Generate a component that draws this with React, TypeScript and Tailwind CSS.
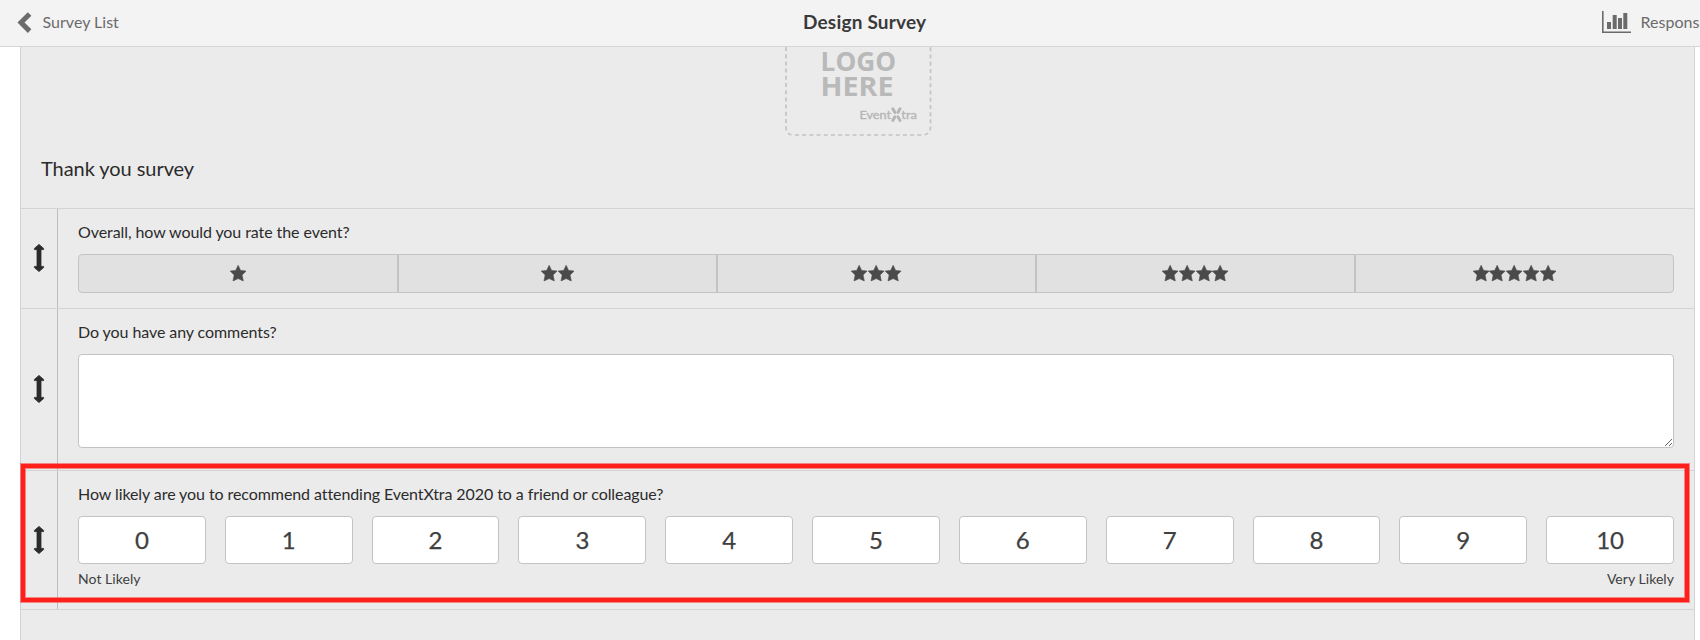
import type { ReactNode } from 'react';

const STAR = 'M8.15 0.3 L10.6 5.4 L16.1 6.1 L12.1 9.9 L13.3 15.9 L8.15 13.6 L3 15.9 L4.2 9.9 L0.2 6.1 L5.7 5.4 Z';

function Stars({ count }: { count: number }) {
  return (
    <span className="flex">
      {Array.from({ length: count }, (_, i) => (
        <svg key={i} className="h-[17px] w-[16.7px] text-[#4a4a4a]" viewBox="0 0 16.7 17">
          <path d={STAR} fill="currentColor" stroke="currentColor" strokeWidth="0.6" strokeLinejoin="round" />
        </svg>
      ))}
    </span>
  );
}

function DragHandle() {
  return (
    <svg className="h-7 w-[10px] overflow-visible" viewBox="0 0 10 28">
      <path
        d="M5 0.4 L9.6 4.4 V5.6 H7 V22.4 H9.6 V23.6 L5 27.6 L0.4 23.6 V22.4 H3 V5.6 H0.4 V4.4 Z"
        fill="#2b2b2b"
        stroke="#2b2b2b"
        strokeWidth="0.8"
        strokeLinejoin="round"
      />
    </svg>
  );
}

function Question({ title, height, children }: { title: string; height: string; children: ReactNode }) {
  return (
    <section className={`flex border-b border-[#d4d4d4] ${height}`}>
      <div className="flex w-[37px] shrink-0 items-center justify-center border-r border-[#bdbdbd] pb-px">
        <DragHandle />
      </div>
      <div className="flex-1 pr-5 pl-5">
        <h3 className="mt-[11px] h-6 text-[16px] leading-6 tracking-[-0.08px] text-[#2b2b2b]">{title}</h3>
        {children}
      </div>
    </section>
  );
}

function Logo() {
  return (
    <svg className="h-[90px] w-[150px] shrink-0 overflow-visible" viewBox="783 47 150 90">
      <path
        d="M786 47 V127 Q786 135 794 135 H922 Q930.5 135 930.5 127 V47"
        fill="none"
        stroke="#c3c3c3"
        strokeWidth="1.7"
        strokeDasharray="4 3.2"
      />
      <g fill="#b9b9b9" fontFamily="'Open Sans', sans-serif" fontWeight="700" fontSize="27.5">
        <text x="820.6" y="71" textLength="75.5" lengthAdjust="spacingAndGlyphs">LOGO</text>
        <text x="820.6" y="95.8" textLength="73" lengthAdjust="spacingAndGlyphs">HERE</text>
      </g>
      <g fill="#b5b5b5" stroke="#b5b5b5" strokeWidth="0.35" fontFamily="Lato, sans-serif" fontSize="12">
        <text x="859.5" y="119" textLength="31.5" lengthAdjust="spacingAndGlyphs">Event</text>
        <text x="901.3" y="119" textLength="15.7" lengthAdjust="spacingAndGlyphs">tra</text>
      </g>
      <g stroke="#b5b5b5" strokeWidth="2.9" strokeLinecap="round">
        <path d="M892.8 108.8 L894.9 112.4" />
        <path d="M900 108.8 L897.9 112.4" />
        <path d="M892.8 120.4 L894.9 116.8" />
        <path d="M900 120.4 L897.9 116.8" />
      </g>
    </svg>
  );
}

export default function App() {
  return (
    <div className="relative h-[640px] w-[1700px] overflow-hidden bg-white font-['Lato',sans-serif]">
      <header className="relative z-10 grid h-[47px] grid-cols-[803px_124px_1fr] items-center border-b border-[#d6d6d6] bg-[#f3f3f3]">
        <div className="flex items-center pb-0.5 pl-[17px]">
          <svg className="h-6 w-4" viewBox="0 0 16 24">
            <path d="M12.6 3.9 L4 12.6 L12.6 21.1" fill="none" stroke="#6b6b6b" strokeWidth="5" />
          </svg>
          <span className="ml-[9.6px] text-[16px] leading-6 text-[#6b6b6b]">Survey List</span>
        </div>
        <h1 className="pb-0.5 text-[19px] leading-6 font-bold tracking-[0.2px] whitespace-nowrap text-[#3a3a3a]">
          Design Survey
        </h1>
        <div className="flex items-center pb-0.5 pl-[675px] whitespace-nowrap">
          <svg className="h-[22px] w-[29px] shrink-0" viewBox="0 0 29 22">
            <path d="M0.8 0 V21.2 H29" fill="none" stroke="#6b6b6b" strokeWidth="1.6" />
            <path d="M5 11h4v7H5z M10.7 4h4v14h-4z M16 7h4v11h-4z M21.3 2h4v16h-4z" fill="#6b6b6b" />
          </svg>
          <span className="ml-[9.6px] text-[16px] leading-6 text-[#6b6b6b]">Respons</span>
        </div>
      </header>

      <main className="ml-5 h-[593px] w-[1675px] border-x border-[#d4d4d4] bg-[#ebebeb]">
        <div className="flex h-[162px] flex-col border-b border-[#d4d4d4]">
          <div className="flex h-[90px] justify-center">
            <Logo />
          </div>
          <h2 className="mt-[17px] pl-5 text-[20px] leading-7 tracking-[-0.06px] text-[#2b2b2b]">Thank you survey</h2>
        </div>

        <Question title="Overall, how would you rate the event?" height="h-[100px]">
          <div className="mt-[10px] grid h-[39px] grid-cols-[320px_319px_319px_319px_319px]">
            {[1, 2, 3, 4, 5].map((n) => (
              <div
                key={n}
                className="flex items-center justify-center border border-[#c3c3c3] bg-[#e1e1e1] first:rounded-l last:rounded-r"
              >
                <Stars count={n} />
              </div>
            ))}
          </div>
        </Question>

        <Question title="Do you have any comments?" height="h-[162px]">
          <textarea className="mt-[10px] block h-[94px] w-full resize rounded border border-[#c3c3c3] bg-white" />
        </Question>

        <Question title="How likely are you to recommend attending EventXtra 2020 to a friend or colleague?" height="h-[139px]">
          <div className="mt-[10px] grid h-12 grid-cols-11 gap-[19.1px]">
            {Array.from({ length: 11 }, (_, n) => (
              <div
                key={n}
                className="flex items-center justify-center rounded border border-[#c3c3c3] bg-white text-[24px] leading-none text-[#404040] [-webkit-text-stroke:0.25px]"
              >
                {n}
              </div>
            ))}
          </div>
          <div className="mt-[5px] flex justify-between text-[14px] leading-5 tracking-[0.05px] text-[#404040]">
            <span>Not Likely</span>
            <span>Very Likely</span>
          </div>
        </Question>
      </main>

      <div className="pointer-events-none absolute top-[464px] left-[21px] z-20 h-[138px] w-[1668px] border-4 border-[#ff1f1b] shadow-[0_0_0_1px_#ff1f1b80,inset_0_0_0_1px_#ff1f1b80]" />
    </div>
  );
}
